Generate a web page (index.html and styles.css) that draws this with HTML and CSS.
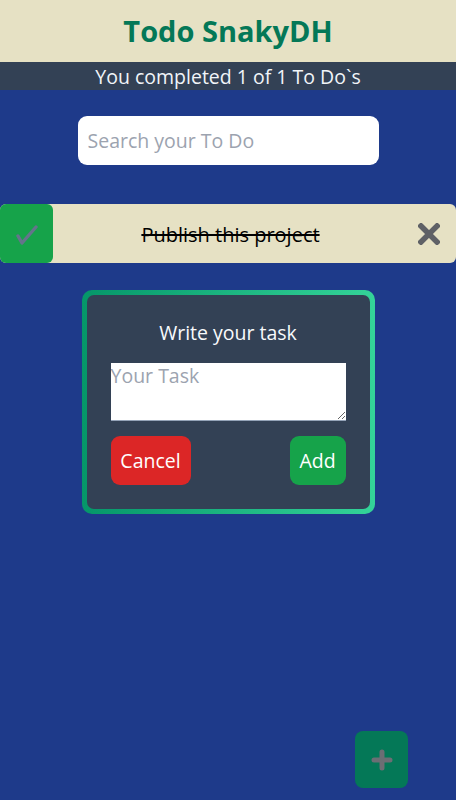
FILE: index.html
```html
<!DOCTYPE html>
<html>
<head>
<meta charset="utf-8">
<link rel="stylesheet" href="styles.css">
</head>
<body>
<header class="header">
  <h1 class="title">Todo SnakyDH</h1>
</header>
<div class="counter">You completed 1 of 1 To Do`s</div>
<main class="main">
  <input class="search" type="text" placeholder="Search your To Do">
  <ul class="list">
    <li class="item">
      <span class="check">
        <svg width="24" height="20" viewBox="0 0 24 20"><path d="M3 11 L7 18 L21 2" fill="none" stroke="#64748b" stroke-width="3.4" stroke-linecap="round" stroke-linejoin="round"/></svg>
      </span>
      <p class="item-text">Publish this project</p>
      <span class="delete">
        <svg width="22" height="22" viewBox="0 0 22 22"><path d="M3 3 L19 19 M19 3 L3 19" stroke="#5f6166" stroke-width="5.5" stroke-linecap="square"/></svg>
      </span>
    </li>
  </ul>
  <div class="modal-frame">
    <form class="modal">
      <label class="modal-label">Write your task</label>
      <textarea class="task-input" placeholder="Your Task"></textarea>
      <div class="buttons">
        <button type="button" class="btn btn-cancel">Cancel</button>
        <button type="button" class="btn btn-add">Add</button>
      </div>
    </form>
  </div>
</main>
<button class="fab" type="button">
  <svg width="22" height="22" viewBox="0 0 22 22"><path d="M11 3 V19 M3 11 H19" stroke="#6b6e74" stroke-width="5" stroke-linecap="round"/></svg>
</button>
</body>
</html>
```
FILE: styles.css
```css
* { box-sizing: border-box; }
html, body {
  margin: 0;
  padding: 0;
  height: 100%;
}
body {
  background: #1e3a8a;
  font-family: "Open Sans", "Noto Sans", sans-serif;
  width: 456px;
  min-height: 800px;
}
.header {
  background: #e6e1c4;
  height: 62px;
  display: flex;
  align-items: center;
  justify-content: center;
}
.title {
  margin: 0;
  font-size: 29px;
  font-weight: 700;
  color: #047857;
  line-height: 1;
  padding-bottom: 2px;
}
.counter {
  background: #334155;
  color: #f1f5f9;
  height: 28px;
  line-height: 29px;
  text-align: center;
  font-size: 19.5px;
}
.main {
  display: flex;
  flex-direction: column;
  align-items: center;
}
.search {
  margin-top: 26px;
  width: 301px;
  height: 49px;
  border: none;
  border-radius: 9px;
  background: #fff;
  padding: 0 10px;
  font-family: inherit;
  font-size: 19.5px;
  color: #111;
  outline: none;
}
.search::placeholder { color: #9ca3af; }
.list {
  list-style: none;
  margin: 39px 0 0;
  padding: 0;
  width: 100%;
}
.item {
  height: 59px;
  background: #e6e1c4;
  border-radius: 6px;
  display: flex;
  align-items: center;
  position: relative;
}
.check {
  width: 53px;
  height: 59px;
  background: #16a34a;
  border-radius: 6px;
  display: flex;
  align-items: center;
  justify-content: center;
  padding-top: 2px;
}
.item-text {
  flex: 1;
  margin: 0;
  text-align: center;
  font-size: 20px;
  color: #000;
  text-decoration: line-through;
  padding-left: 6px;
  padding-top: 1px;
}
.delete {
  width: 54px;
  display: flex;
  justify-content: center;
  align-items: center;
}
.modal-frame {
  margin-top: 27px;
  width: 293px;
  height: 224px;
  padding: 5px;
  border-radius: 10px;
  background: linear-gradient(to right, #059669, #34d399);
}
.modal {
  height: 100%;
  background: #334155;
  border-radius: 7px;
  padding: 24px 24px;
  display: flex;
  flex-direction: column;
  align-items: stretch;
}
.modal-label {
  color: #f8fafc;
  font-size: 19.5px;
  text-align: center;
  line-height: 28px;
  height: 28px;
  margin-bottom: 16px;
}
.task-input {
  height: 58px;
  width: 235px;
  border: none;
  border-bottom: 1px solid #94a3b8;
  border-radius: 0;
  padding: 0;
  font-family: inherit;
  font-size: 19.5px;
  line-height: 1.3;
  resize: vertical;
  outline: none;
  margin: 0;
  display: block;
}
.task-input::placeholder { color: #9ca3af; }
.buttons {
  margin-top: 15px;
  display: flex;
  justify-content: space-between;
}
.btn {
  height: 49px;
  border: none;
  border-radius: 9px;
  color: #fff;
  font-family: inherit;
  font-size: 19.5px;
  padding: 0;
  cursor: pointer;
}
.btn-cancel { background: #dc2626; width: 80px; }
.btn-add { background: #16a34a; width: 56px; }
.fab {
  position: fixed;
  right: 48px;
  bottom: 12px;
  width: 53px;
  height: 57px;
  border: none;
  border-radius: 8px;
  background: #047857;
  display: flex;
  align-items: center;
  justify-content: center;
  padding: 0;
}
```
